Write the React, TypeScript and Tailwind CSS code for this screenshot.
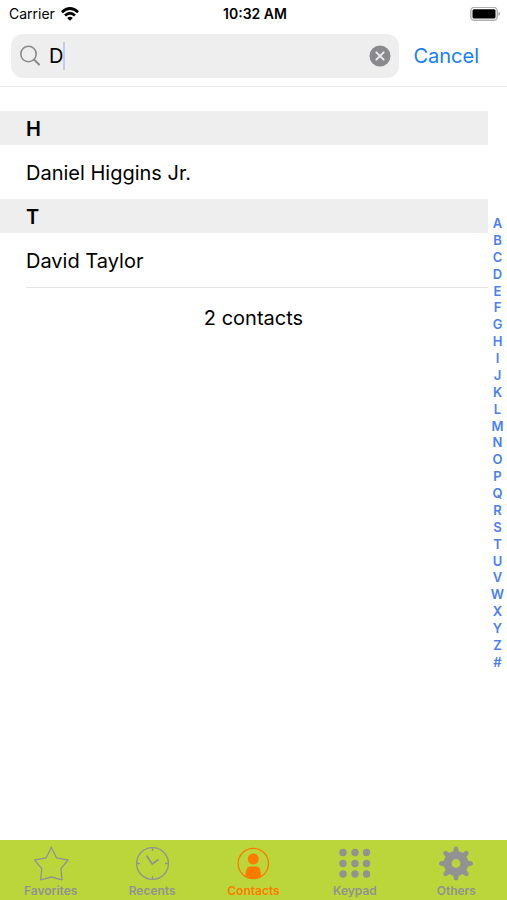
import { useState } from 'react';
import type { ReactNode } from 'react';

const INDEX_LETTERS = 'ABCDEFGHIJKLMNOPQRSTUVWXYZ#'.split('');

const SECTIONS = [
  { letter: 'H', contacts: ['Daniel Higgins Jr.'] },
  { letter: 'T', contacts: ['David Taylor'] },
];

const TEETH = [0, 45, 90, 135, 180, 225, 270, 315];
const DOT_COLUMNS = [6, 18, 29.5];
const DOT_ROWS = [6.5, 17.5, 28];

function StarIcon() {
  return (
    <svg viewBox="0 0 36 36" className="size-9" fill="none" stroke="currentColor" strokeWidth="1.3" strokeLinejoin="round">
      <path d="M18.3 1.2 L23.4 11.8 L35 14 L28 22.6 L29 33.8 L18.3 31 L7.700 33.800 L8.700 22.600 L1.600 14 L13.200 11.800 Z" />
    </svg>
  );
}

function ClockIcon() {
  return (
    <svg viewBox="0 0 36 36" className="size-9" fill="none" stroke="currentColor" strokeWidth="1.3">
      <circle cx="18.500" cy="17.500" r="15.900" />
      <path d="M18.500 1.600v3.500M18.500 30v3.500M2.600 17.500h3.500M31 17.500h3.500" />
      <path d="M12.500 9.500 L18.200 18 L24.500 13.500" strokeWidth="1.600" />
    </svg>
  );
}

function PersonIcon() {
  return (
    <svg viewBox="0 0 36 36" className="size-9" fill="currentColor">
      <circle cx="18.300" cy="17.500" r="15.200" fill="none" stroke="currentColor" strokeWidth="1.300" />
      <circle cx="18.300" cy="13" r="5.500" />
      <path d="M10.500 30.500 C10.500 24 12 20.500 15 20.500 H21.500 C24.500 20.500 26 24 26 30.500 Q18.300 35 10.500 30.500Z" />
    </svg>
  );
}

function KeypadIcon() {
  return (
    <svg viewBox="0 0 36 36" className="size-9" fill="currentColor">
      {DOT_ROWS.map((y) => DOT_COLUMNS.map((x) => <circle key={`${x}-${y}`} cx={x} cy={y} r="3.700" />))}
    </svg>
  );
}

function GearIcon() {
  return (
    <svg viewBox="0 0 36 36" className="size-9" fill="currentColor">
      <circle cx="18" cy="17.500" r="8.400" fill="none" stroke="currentColor" strokeWidth="8" />
      {TEETH.map((angle) => (
        <path key={angle} d="M15 6.500 L16 1.500 Q18 -0.500 20 1.500 L21 6.500Z" transform={`rotate(${angle} 18 17.5)`} />
      ))}
    </svg>
  );
}

const TABS: { label: string; icon: ReactNode }[] = [
  { label: 'Favorites', icon: <StarIcon /> },
  { label: 'Recents', icon: <ClockIcon /> },
  { label: 'Contacts', icon: <PersonIcon /> },
  { label: 'Keypad', icon: <KeypadIcon /> },
  { label: 'Others', icon: <GearIcon /> },
];

function StatusBar() {
  return (
    <div className="grid h-7 grid-cols-3 items-center pl-[9px] pr-[6px] text-sm">
      <div className="flex items-center gap-1.5">
        <span>Carrier</span>
        <svg viewBox="0 0 18 14" className="h-3.5 w-[18px]" fill="none" stroke="black" strokeWidth="2.700">
          <path d="M0.900 5.200 Q9 -2.200 17.100 5.200" />
          <path d="M4 8.500 Q9 4 14 8.500" />
          <path d="M9 13.800 L6.200 10.900 Q9 8.600 11.800 10.900Z" fill="black" stroke="none" />
        </svg>
      </div>
      <span className="text-center font-semibold">10:32 AM</span>
      <svg viewBox="0 0 31 15" className="h-[15px] w-[31px] justify-self-end">
        <rect x="0.800" y="0.400" width="26.400" height="12.800" rx="3.500" fill="white" stroke="#b0b0b0" strokeWidth="1.400" />
        <rect x="2.500" y="2.200" width="23" height="9.200" rx="1.500" fill="black" />
        <path d="M28.500 4.500 Q31.500 6.800 28.500 9.100Z" fill="#a0a0a0" />
      </svg>
    </div>
  );
}

export default function App() {
  const [query, setQuery] = useState('D');
  const [activeTab, setActiveTab] = useState('Contacts');

  return (
    <div className="flex min-h-screen flex-col bg-white font-[Inter,sans-serif] text-black">
      <header className="border-b border-[#e9e9e9] pb-2">
        <StatusBar />
        <div className="flex items-center gap-3.5 pl-[11px] pr-7 pt-1.5">
          <div className="flex h-11 flex-1 items-center rounded-xl bg-[#eeeeee] pl-2 pr-2">
            <svg viewBox="0 0 22 22" className="size-[22px]" fill="none" stroke="#8a8a8e" strokeWidth="1.600" strokeLinecap="round">
              <circle cx="9.500" cy="9" r="7.700" />
              <path d="M15 14.500 L20 19.500" strokeWidth="2" />
            </svg>
            <div className="relative ml-2 flex-1">
              <input
                type="text"
                aria-label="Search contacts"
                value={query}
                onChange={(e) => setQuery(e.target.value)}
                className="block w-full bg-transparent text-xl leading-7 outline-none"
              />
              {/* cursor */}
              <span className="pointer-events-none absolute left-3.5 top-0 h-7 w-0.5 bg-[#c5cdf5]" />
            </div>
            <button type="button" aria-label="Clear" onClick={() => setQuery('')}>
              <svg viewBox="0 0 22 22" className="size-[22px]">
                <circle cx="11" cy="11" r="10.500" fill="#8a8a8e" />
                <path d="M7.300 7.300l7.400 7.400M14.700 7.300l-7.400 7.400" stroke="#eeeeee" strokeWidth="1.900" strokeLinecap="round" />
              </svg>
            </button>
          </div>
          <button type="button" className="text-xl text-[#147efb]">Cancel</button>
        </div>
      </header>

      <main className="flex flex-1">
        <div className="flex-1 pt-6">
          {SECTIONS.map((section) => (
            <section key={section.letter}>
              <h2 className="bg-[#eeeeee] pl-[26px] pt-0.5 text-xl font-semibold leading-8">{section.letter}</h2>
              <ul className="pl-[26px] pt-0.5 text-xl leading-[52px]">
                {section.contacts.map((name) => (
                  <li key={name}>{name}</li>
                ))}
              </ul>
            </section>
          ))}
          <div className="ml-[26px] border-t border-[#e5e5e5]" />
          <p className="pl-[19px] text-center text-xl leading-[60px]">2 contacts</p>
        </div>
        <nav aria-label="Index" className="flex w-[19px] flex-col justify-center pb-[42px]">
          <ul className="flex h-[455px] flex-col justify-between text-center text-[13px] font-semibold leading-4 text-[#4a80f5]">
            {INDEX_LETTERS.map((letter) => (
              <li key={letter}>{letter}</li>
            ))}
          </ul>
        </nav>
      </main>

      <footer className="grid h-[60px] grid-cols-5 bg-[#bbd63a]">
        {TABS.map(({ label, icon }) => (
          <button
            key={label}
            type="button"
            onClick={() => setActiveTab(label)}
            className={`flex flex-col items-center pt-1.5 text-xs font-semibold leading-[18px] ${
              activeTab === label ? 'text-[#ff7a00]' : 'text-[#929292]'
            }`}
          >
            {icon}
            {label}
          </button>
        ))}
      </footer>
    </div>
  );
}
